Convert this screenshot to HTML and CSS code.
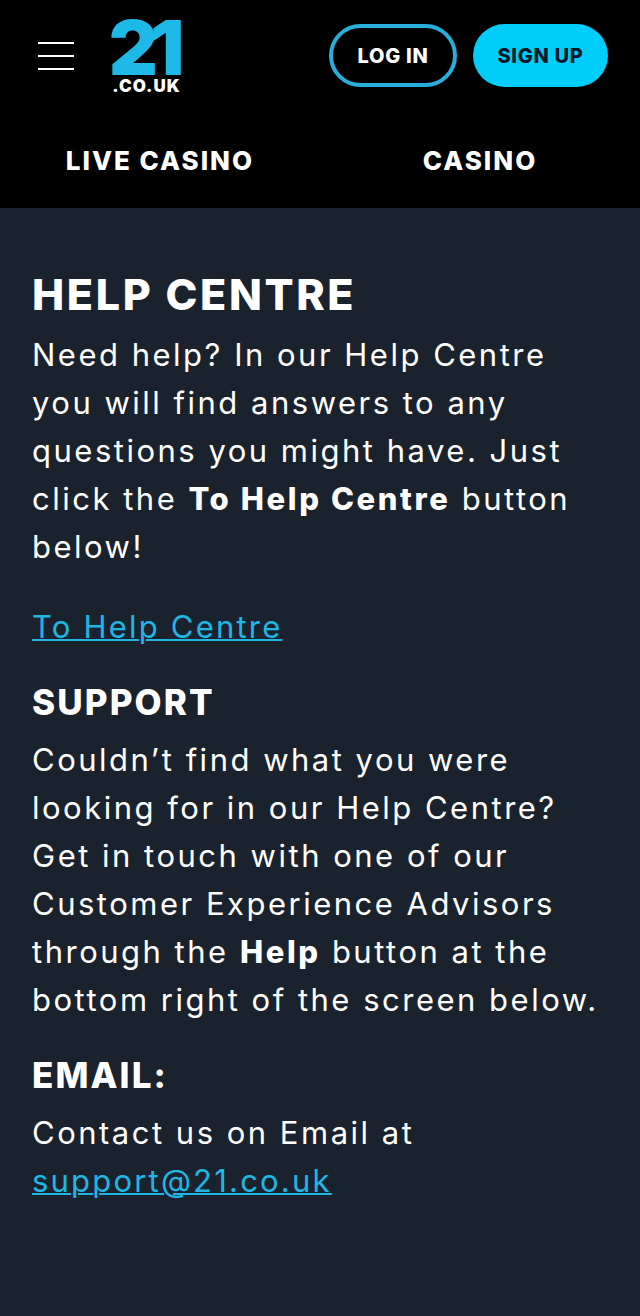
FILE: index.html
```html
<!DOCTYPE html>
<html lang="en">
<head>
    <meta charset="UTF-8">
    <meta name="viewport" content="width=device-width, initial-scale=1.0">
    <title>Help Centre - 21.co.uk</title>
    <link rel="stylesheet" href="styles.css">
</head>
<body>
    <header class="site-header">
        <div class="top-bar">
            <button class="menu-btn" aria-label="Menu">
                <svg width="36" height="28" viewBox="0 0 36 28"><path d="M0 1h36M0 14h36M0 27h36" stroke="#fff" stroke-width="2"/></svg>
            </button>
            <a class="logo" href="#">
                <span class="logo-num">21</span>
                <span class="logo-tld">.CO.UK</span>
            </a>
            <div class="auth">
                <a class="btn btn-login" href="#">LOG IN</a>
                <a class="btn btn-signup" href="#">SIGN UP</a>
            </div>
        </div>
        <nav class="main-nav">
            <a href="#">LIVE CASINO</a>
            <a href="#">CASINO</a>
        </nav>
    </header>
    <main class="content">
        <h1>HELP CENTRE</h1>
        <p>Need help? In our Help Centre<br>you will find answers to any<br>questions you might have. Just<br>click the <strong>To Help Centre</strong> button<br>below!</p>
        <p><a href="#">To Help Centre</a></p>
        <h2>SUPPORT</h2>
        <p>Couldn’t find what you were<br>looking for in our Help Centre?<br>Get in touch with one of our<br>Customer Experience Advisors<br>through the <strong>Help</strong> button at the<br>bottom right of the screen below.</p>
        <h2>EMAIL:</h2>
        <p>Contact us on Email at<br><a href="#">support@21.co.uk</a></p>
    </main>
</body>
</html>
```
FILE: styles.css
```css
:root {
    --cyan: #00cdf9;
    --link: #1fb6e4;
    --background: #1a222d;
}

* {
    margin: 0;
    padding: 0;
    box-sizing: border-box;
}

body {
    font-family: Inter, 'Open Sans', sans-serif;
    background: var(--background);
    color: #fff;
    min-height: 100vh;
}

a {
    text-decoration: none;
    color: inherit;
}

.site-header {
    background: #000;
    height: 208px;
}

.top-bar {
    height: 112px;
    display: flex;
    align-items: flex-start;
    padding: 24px 32px 0 38px;
}

.menu-btn {
    background: none;
    border: none;
    width: 36px;
    height: 28px;
    margin-top: 18px;
    display: block;
}

.logo {
    display: flex;
    flex-direction: column;
    align-items: center;
    width: 69px;
    margin: -6px 0 0 38px;
}

.logo-num {
    font-size: 76px;
    font-weight: 900;
    line-height: 58px;
    letter-spacing: -8px;
    margin-left: -8px;
    color: #1fb9e8;
}

.logo-tld {
    font-size: 17px;
    font-weight: 900;
    line-height: 16px;
    letter-spacing: 1px;
    margin-top: 2px;
    white-space: nowrap;
}

.auth {
    margin-left: auto;
    display: flex;
    gap: 16px;
}

.btn {
    height: 63px;
    border-radius: 32px;
    display: flex;
    align-items: center;
    justify-content: center;
    font-size: 20px;
    font-weight: 800;
    letter-spacing: 0.7px;
}

.btn-login {
    width: 128px;
    border: 4px solid #27aedb;
}

.btn-signup {
    width: 135px;
    background: var(--cyan);
    color: #08182b;
}

.main-nav {
    display: grid;
    grid-template-columns: 1fr 1fr;
    height: 96px;
    align-items: center;
    text-align: center;
    font-size: 26px;
    font-weight: 800;
    letter-spacing: 2px;
}

.content {
    padding: 60px 32px 0;
    font-size: 31px;
    line-height: 48px;
    letter-spacing: 2.5px;
    font-weight: 400;
}

h1 {
    font-size: 43px;
    font-weight: 800;
    line-height: 52px;
    letter-spacing: 2.65px;
    margin-bottom: 11px;
}

h2 {
    font-size: 35px;
    font-weight: 800;
    line-height: 44px;
    letter-spacing: 2.1px;
    margin-bottom: 12px;
}

.content p {
    margin-bottom: 29px;
}

.content h1 + p {
    margin-bottom: 32px;
}

.content p a {
    color: var(--link);
    letter-spacing: 2.2px;
    text-decoration: underline;
    text-decoration-thickness: 2px;
}

.content strong {
    font-weight: 800;
    letter-spacing: 2.6px;
}
```
